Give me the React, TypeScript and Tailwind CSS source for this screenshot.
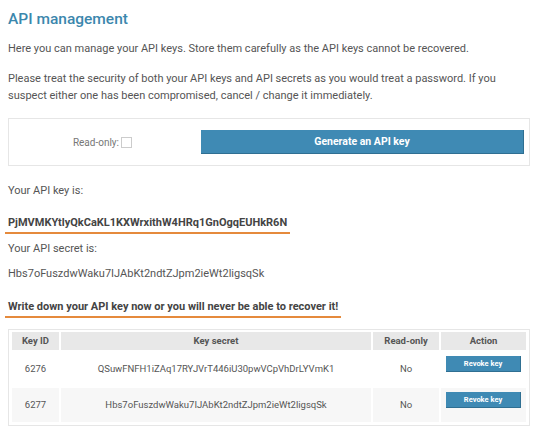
import React from 'react';

const keys = [
  { id: '6276', secret: 'QSuwFNFH1iZAq17RYJVrT446iU30pwVCpVhDrLYVmK1', readOnly: 'No' },
  { id: '6277', secret: 'Hbs7oFuszdwWaku7IJAbKt2ndtZJpm2ieWt2ligsqSk', readOnly: 'No' },
];

export default function App() {
  return (
    <div className="h-[431px] w-[540px] overflow-hidden bg-white px-2 pt-[8px] font-['Roboto',sans-serif] text-[11px] text-[#555]">
      <h1 className="text-[15.5px] font-medium leading-[22px] text-[#3b87ad]">API management</h1>
      <p className="mt-[11px] leading-[16px]">
        Here you can manage your API keys. Store them carefully as the API keys cannot be recovered.
      </p>
      <p className="mt-[13px] leading-[17px]">
        Please treat the security of both your API keys and API secrets as you would treat a password. If you
        suspect either one has been compromised, cancel / change it immediately.
      </p>

      <div className="mt-[14px] flex h-[48px] w-[522px] items-center border border-[#e6e6e6]">
        <label className="flex w-[123px] items-center justify-end text-[10px] text-[#777]">
          Read-only:
          <span className="ml-[2px] inline-block h-[11px] w-[11px] border border-[#ccc] bg-white" />
        </label>
        <button className="ml-[69px] h-[24px] w-[323px] border-b border-r border-[#2f6f92] bg-[#3f8ab4] text-[10.5px] font-bold text-white">
          Generate an API key
        </button>
      </div>

      <p className="mt-[17px] leading-[16px]">Your API key is:</p>
      <div className="mt-[16px] -ml-[3px] inline-block border-b-2 border-[#e58a3c] px-[3px] pb-[2px] font-bold leading-[15px] text-[#444]">
        PjMVMKYtlyQkCaKL1KXWrxithW4HRq1GnOgqEUHkR6N
      </div>
      <p className="mt-[7px] leading-[16px]">Your API secret is:</p>
      <p className="mt-[9px] leading-[16px]">Hbs7oFuszdwWaku7IJAbKt2ndtZJpm2ieWt2ligsqSk</p>
      <div className="mt-[17px] -ml-[3px] inline-block border-b-2 border-[#e58a3c] px-[3px] pb-[2px] font-bold leading-[15px] text-[#444]">
        Write down your API key now or you will never be able to recover it!
      </div>

      <div className="mt-[11px] w-[522px] border border-[#e6e6e6] px-[1px] pb-[1px]">
        <table className="w-full border-separate border-spacing-[2px] text-[9.5px]">
          <thead>
            <tr className="text-[#555]">
              <th className="h-[18px] w-[47px] bg-[#e8e8e8] font-bold">Key ID</th>
              <th className="bg-[#e8e8e8] font-bold">Key secret</th>
              <th className="w-[66px] bg-[#e8e8e8] font-bold">Read-only</th>
              <th className="w-[85px] bg-[#e8e8e8] font-bold">Action</th>
            </tr>
          </thead>
          <tbody>
            {keys.map((k, i) => (
              <tr key={k.id} className={i % 2 === 1 ? 'bg-[#f7f7f7]' : 'bg-white'}>
                <td className="h-[34px] text-center">{k.id}</td>
                <td className="text-center">{k.secret}</td>
                <td className="text-center">{k.readOnly}</td>
                <td className="pt-[4px] text-center align-top">
                  <button className="h-[16px] w-[75px] border-b border-r border-[#2f6f92] bg-[#3f8ab4] text-[7.5px] font-bold text-white">
                    Revoke key
                  </button>
                </td>
              </tr>
            ))}
          </tbody>
        </table>
      </div>
    </div>
  );
}
